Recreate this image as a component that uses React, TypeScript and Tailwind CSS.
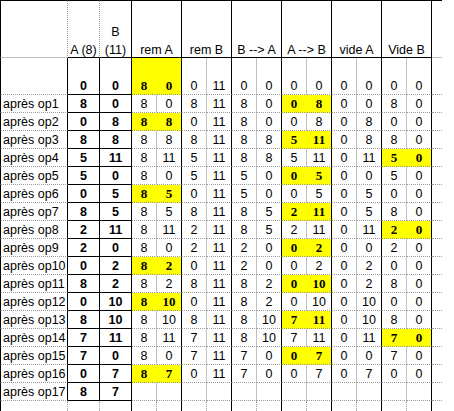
import clsx from "clsx";

type Row = { label: string; a: number; b: number; g: number[][]; y: number };

const groups = ["rem A", "rem B", "B --> A", "A --> B", "vide A", "Vide B"];

// y = index of the highlighted (yellow) group, -1 when none
const rows: Row[] = [
  { label: "", a: 0, b: 0, g: [[8, 0], [0, 11], [0, 0], [0, 0], [0, 0], [0, 0]], y: 0 },
  { label: "après op1", a: 8, b: 0, g: [[8, 0], [8, 11], [8, 0], [0, 8], [0, 0], [8, 0]], y: 3 },
  { label: "après op2", a: 0, b: 8, g: [[8, 8], [0, 11], [8, 0], [0, 8], [0, 8], [0, 0]], y: 0 },
  { label: "après op3", a: 8, b: 8, g: [[8, 8], [8, 11], [8, 8], [5, 11], [0, 8], [8, 0]], y: 3 },
  { label: "après op4", a: 5, b: 11, g: [[8, 11], [5, 11], [8, 8], [5, 11], [0, 11], [5, 0]], y: 5 },
  { label: "après op5", a: 5, b: 0, g: [[8, 0], [5, 11], [5, 0], [0, 5], [0, 0], [5, 0]], y: 3 },
  { label: "après op6", a: 0, b: 5, g: [[8, 5], [0, 11], [5, 0], [0, 5], [0, 5], [0, 0]], y: 0 },
  { label: "après op7", a: 8, b: 5, g: [[8, 5], [8, 11], [8, 5], [2, 11], [0, 5], [8, 0]], y: 3 },
  { label: "après op8", a: 2, b: 11, g: [[8, 11], [2, 11], [8, 5], [2, 11], [0, 11], [2, 0]], y: 5 },
  { label: "après op9", a: 2, b: 0, g: [[8, 0], [2, 11], [2, 0], [0, 2], [0, 0], [2, 0]], y: 3 },
  { label: "après op10", a: 0, b: 2, g: [[8, 2], [0, 11], [2, 0], [0, 2], [0, 2], [0, 0]], y: 0 },
  { label: "après op11", a: 8, b: 2, g: [[8, 2], [8, 11], [8, 2], [0, 10], [0, 2], [8, 0]], y: 3 },
  { label: "après op12", a: 0, b: 10, g: [[8, 10], [0, 11], [8, 2], [0, 10], [0, 10], [0, 0]], y: 0 },
  { label: "après op13", a: 8, b: 10, g: [[8, 10], [8, 11], [8, 10], [7, 11], [0, 10], [8, 0]], y: 3 },
  { label: "après op14", a: 7, b: 11, g: [[8, 11], [7, 11], [8, 10], [7, 11], [0, 11], [7, 0]], y: 5 },
  { label: "après op15", a: 7, b: 0, g: [[8, 0], [7, 11], [7, 0], [0, 7], [0, 0], [7, 0]], y: 3 },
  { label: "après op16", a: 0, b: 7, g: [[8, 7], [0, 11], [7, 0], [0, 7], [0, 7], [0, 0]], y: 0 },
  { label: "après op17", a: 8, b: 7, g: [], y: -1 },
];

const dotB = "border-b border-b-[#9a9a9a] [border-bottom-style:dotted]";
const dotR = "border-r border-r-[#9a9a9a] [border-right-style:dotted]";

function Sub({ v, first, yellow, top }: { v?: number; first: boolean; yellow: boolean; top: boolean }) {
  return (
    <div
      className={clsx(
        "flex justify-center border-r",
        dotB,
        first ? (yellow ? "border-r-[#ffff00]" : "border-r-[#c0c0c0]") : "border-r-black",
        yellow && "bg-[#ffff00] font-['Liberation_Serif'] font-bold text-[13px]",
        top ? "items-end pb-[1px]" : "items-center"
      )}
    >
      {v}
    </div>
  );
}

export default function App() {
  return (
    <div className="w-[454px] h-[411px] overflow-hidden bg-white text-black font-['Liberation_Sans',Arial,sans-serif] text-[12.5px] leading-[14px]">
      <div className="grid grid-cols-[68px_32px_32px_repeat(12,25px)_10px_12px] grid-rows-[58px_37px_repeat(17,18px)_12px]">
        {/* header */}
        <div className={clsx("border-l border-t border-b border-l-black border-t-black border-b-[#c0c0c0]", dotR)} />
        <div className={clsx("flex items-end justify-center border-t border-b border-t-black border-b-black", dotR)}>A (8)</div>
        <div className="flex flex-col items-center justify-end border-t border-b border-r border-black">
          <span className="mb-[4px]">B</span>
          <span>(11)</span>
        </div>
        {groups.map((g) => (
          <div key={g} className="col-span-2 flex items-end justify-center border-t border-b border-r border-black">
            {g}
          </div>
        ))}
        <div className="border-t border-b border-t-black border-b-[#c0c0c0]" />
        <div />

        {/* data */}
        {rows.map((r, i) => {
          const top = i === 0;
          const align = top ? "items-end pb-[1px]" : "items-center";
          return [
            <div key={r.label + "l"} className={clsx("flex pl-[2px] border-l border-r border-l-black border-r-black", dotB, align)}>
              {r.label}
            </div>,
            <div key={r.label + "a"} className={clsx("flex justify-center font-bold border-r border-b border-black", align)}>
              {r.a}
            </div>,
            <div key={r.label + "b"} className={clsx("flex justify-center font-bold border-r border-b border-black", align)}>
              {r.b}
            </div>,
            ...groups.flatMap((g, gi) => [
              <Sub key={r.label + g + "0"} v={r.g[gi]?.[0]} first yellow={r.y === gi} top={top} />,
              <Sub key={r.label + g + "1"} v={r.g[gi]?.[1]} first={false} yellow={r.y === gi} top={top} />,
            ]),
            <div key={r.label + "x"} className={dotB} />,
            <div key={r.label + "z"} />,
          ];
        })}

        {/* partial row at the bottom */}
        <div className={clsx("border-l border-l-black", dotR)} />
        <div className={dotR} />
        <div className="border-r border-black" />
        {groups.flatMap((g) => [
          <div key={g + "e0"} className={dotR} />,
          <div key={g + "e1"} className="border-r border-black" />,
        ])}
        <div />
        <div />
      </div>
    </div>
  );
}
